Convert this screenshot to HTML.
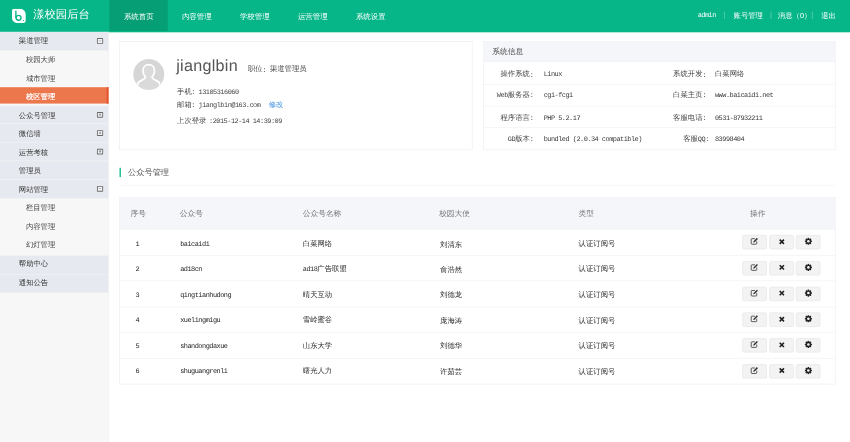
<!DOCTYPE html>
<html lang="zh">
<head>
<meta charset="utf-8">
<title>漾校园后台</title>
<style>
html,body{margin:0;padding:0;background:#fff;}
body{width:850px;height:442px;overflow:hidden;position:relative;font-family:"Liberation Sans",sans-serif;}
#wrap{filter:grayscale(0);text-rendering:geometricPrecision;position:absolute;left:0;top:0;width:1920px;height:999px;transform:scale(0.442708);transform-origin:0 0;background:#fff;overflow:hidden;color:#555;font-size:16.6px;}
#wrap *{box-sizing:border-box;}
.abs{position:absolute;white-space:nowrap;}
/* header */
#hd{position:absolute;left:0;top:0;width:1920px;height:72.6px;background:#06b688;}
#hd .act{position:absolute;left:247px;top:0;width:132px;height:70px;background:#059e75;}
#hd .nv{position:absolute;top:0;height:72px;line-height:78px;width:131px;text-align:center;color:#fff;font-size:16.8px;}
#hd .rt{position:absolute;top:0;height:72px;line-height:69px;color:#fff;font-size:16.6px;white-space:nowrap;}
#hd .sp{position:absolute;top:26px;width:1px;height:17px;background:#9fe3cd;}
#logo-t{position:absolute;left:75px;top:0;height:72px;line-height:67px;color:#fff;font-size:25.6px;font-weight:300;white-space:nowrap;}
/* sidebar */
#sb{position:absolute;left:0;top:72px;width:245px;height:927px;background:#f7f7f8;border-right:1px solid #e9e9ec;}
.t1{position:absolute;left:0;width:245px;background:#e6e9ef;border-top:1px solid #f4f5f8;color:#333;font-size:16.6px;padding-left:42.500px;white-space:nowrap;}
.t2{position:absolute;left:0;width:245px;color:#444;font-size:16.6px;padding-left:58.500px;white-space:nowrap;}
.pm{position:absolute;left:219.100px;width:13.5px;height:13.5px;border:2px solid #6a6a6a;border-radius:1.5px;background:#f4f5f8;margin-top:-0.400px;}
.pm:before{content:"";position:absolute;left:1.700px;top:3.900px;width:6px;height:1.7px;background:#777;}
.pm.plus:after{content:"";position:absolute;left:3.900px;top:1.700px;width:1.7px;height:6px;background:#777;}
/* cards */
.card{position:absolute;background:#fff;border:1px solid #e4e5e9;}
.lbl{position:absolute;text-align:right;white-space:nowrap;color:#444;}
.ln{position:absolute;height:1px;background:#e9eaee;}
/* table */
.th{position:absolute;color:#777;font-size:17.4px;white-space:nowrap;}
.td{position:absolute;color:#2a2a2a;font-size:16.6px;white-space:nowrap;}
.btn{position:absolute;width:55px;height:32px;background:#f3f3f3;border:1px solid #dcdcdc;border-radius:4px;}
.btn svg{position:absolute;left:19px;top:7px;width:16px;height:16px;}
#wrap .m{font-family:"Liberation Mono",monospace;font-size:15.6px;letter-spacing:-1.14px;}
#wrap .td.m{color:#222;}
#wrap span.m{position:relative;top:0.5px;}
#wrap span.c{display:inline-block;white-space:nowrap;overflow:visible;vertical-align:baseline;}
#wrap div.m{margin-top:1px;}
</style>
</head>
<body>
<div id="wrap">

<!-- HEADER -->
<div id="hd">
  <svg class="abs" style="left:27px;top:20px" width="32" height="32" viewBox="0 0 32 32">
    <path d="M5 0H19A12 12 0 0 1 31 12V27A5 5 0 0 1 26 32H12A12 12 0 0 1 0 20V5A5 5 0 0 1 5 0Z" fill="#fff"/>
    <rect x="7.300" y="3.500" width="3.100" height="18" rx="1.500" fill="#06b688"/>
    <circle cx="15" cy="20.200" r="5.600" fill="none" stroke="#06b688" stroke-width="3"/>
    <circle cx="26" cy="25.800" r="1.400" fill="#06b688"/>
  </svg>
  <div id="logo-t">漾校园后台</div>
  <div class="act"></div>
  <div class="nv" style="left:248px">系统首页</div>
  <div class="nv" style="left:379px">内容管理</div>
  <div class="nv" style="left:510px">学校管理</div>
  <div class="nv" style="left:641px">运营管理</div>
  <div class="nv" style="left:772px">系统设置</div>

  <div class="rt m" style="left:1576px;">admin</div>
  <div class="sp" style="left:1636px"></div>
  <div class="rt" style="left:1657px;">账号管理</div>
  <div class="sp" style="left:1741px"></div>
  <div class="rt" style="left:1757px;">消息（0）</div>
  <div class="sp" style="left:1834px"></div>
  <div class="rt" style="left:1855px;">退出</div>
</div>

<!-- SIDEBAR -->
<div id="sb">
  <div class="t1" style="top:0;height:42px;line-height:41px;border-top:0">渠道管理</div>
  <div class="pm" style="top:14px"></div>
  <div class="t2" style="top:43px;height:41px;line-height:41px">校园大师</div>
  <div class="t2" style="top:84px;height:41px;line-height:41px">城市管理</div>
  <div class="t2" style="top:125px;height:37px;line-height:42px;background:#ec774d;border-right:4px solid #e5512c;color:#fff;font-weight:bold">校区管理</div>

  <div class="t1" style="top:167px;height:40px;line-height:43px">公众号管理</div>
  <div class="pm plus" style="top:181px"></div>
  <div class="t1" style="top:207px;height:42px;line-height:46px">微信墙</div>
  <div class="pm plus" style="top:222px"></div>
  <div class="t1" style="top:249px;height:42px;line-height:44px">运营考核</div>
  <div class="pm plus" style="top:264px"></div>
  <div class="t1" style="top:291px;height:42px;line-height:42px">管理员</div>
  <div class="t1" style="top:333px;height:42.5px;line-height:43px">网站管理</div>
  <div class="pm" style="top:348px"></div>

  <div class="t2" style="top:376px;height:42px;line-height:42px">栏目管理</div>
  <div class="t2" style="top:418px;height:42px;line-height:45px">内容管理</div>
  <div class="t2" style="top:460px;height:42px;line-height:44px">幻灯管理</div>

  <div class="t1" style="top:504.5px;height:42.5px;line-height:35px">帮助中心</div>
  <div class="t1" style="top:547px;height:42px;line-height:35px">通知公告</div>
</div>

<!-- PROFILE CARD -->
<div class="card" style="left:270px;top:93px;width:797px;height:246px;">
  <svg class="abs" style="left:29px;top:38px" width="72" height="72" viewBox="0 0 72 72">
    <defs><clipPath id="cp"><circle cx="36" cy="36" r="35"/></clipPath></defs>
    <circle cx="36" cy="36" r="35" fill="#d6d6d6"/>
    <g clip-path="url(#cp)">
      <path d="M36 14c-8 0-13 6-13 14 0 6 2.5 11 6 14-1 4-4 5.5-9 7.5-6 2.400-9 5-9 9v14h50v-14c0-4-3-6.600-9-9-5-2-8-3.500-9-7.500 3.500-3 6-8 6-14 0-8-5-14-13-14z" fill="#dadada" stroke="#fff" stroke-width="3.800"/>
    </g>
  </svg>
</div>
<div class="abs" style="left:398px;top:123px;font-size:36.5px;letter-spacing:0.6px;line-height:50px;color:#555;">jianglbin</div>
<div class="abs" style="left:560px;top:145px;line-height:22px;color:#444;">职位<span class="m">: </span>渠道管理员</div>
<div class="abs" style="left:400px;top:196px;line-height:22px;color:#444;"><span class="c" style="width:32px">手机</span><span class="m">: 13105316060</span></div>
<div class="abs" style="left:400px;top:225.500px;line-height:22px;color:#444;"><span class="c" style="width:32px">邮箱</span><span class="m">: jianglbin@163.com</span></div>
<div class="abs" style="left:607px;top:225.500px;line-height:22px;color:#3d8fe0;">修改</div>
<div class="abs" style="left:400px;top:261.500px;line-height:22px;color:#444;"><span class="c" style="width:64px">上次登录</span><span class="m"> :2015-12-14 14:39:09</span></div>

<!-- SYSTEM INFO CARD -->
<div class="card" style="left:1091px;top:93px;width:796px;height:246px;">
  <div class="abs" style="left:0;top:0;width:794px;height:45px;background:#f5f6fa;border-bottom:1px solid #e9eaee;"></div>
</div>
<div class="abs" style="left:1112px;top:105px;line-height:22px;font-size:17.4px;color:#4a4a4a;">系统信息</div>
<div class="ln" style="left:1092px;top:190.500px;width:794px"></div>
<div class="ln" style="left:1092px;top:239px;width:794px"></div>
<div class="ln" style="left:1092px;top:288px;width:794px"></div>

<div class="lbl" style="left:1105px;width:100px;top:156px;line-height:22px;">操作系统<span class="m">:</span></div>
<div class="lbl" style="left:1105px;width:100px;top:203px;line-height:22px;"><span class="m">Web</span>服务器<span class="m">:</span></div>
<div class="lbl" style="left:1105px;width:100px;top:254.500px;line-height:22px;">程序语言<span class="m">:</span></div>
<div class="lbl" style="left:1105px;width:100px;top:302.500px;line-height:22px;"><span class="m">GD</span>版本<span class="m">:</span></div>
<div class="abs m" style="left:1228px;top:156px;line-height:22px;color:#3a3a3a">Linux</div>
<div class="abs m" style="left:1228px;top:203px;line-height:22px;color:#3a3a3a">cgi-fcgi</div>
<div class="abs m" style="left:1228px;top:254.500px;line-height:22px;color:#3a3a3a">PHP 5.2.17</div>
<div class="abs m" style="left:1228px;top:302.500px;line-height:22px;color:#3a3a3a">bundled (2.0.34 compatible)</div>

<div class="lbl" style="left:1495px;width:100px;top:156px;line-height:22px;">系统开发<span class="m">:</span></div>
<div class="lbl" style="left:1495px;width:100px;top:203px;line-height:22px;">白菜主页<span class="m">:</span></div>
<div class="lbl" style="left:1495px;width:100px;top:254.500px;line-height:22px;">客服电话<span class="m">:</span></div>
<div class="lbl" style="left:1501px;width:100px;top:302.500px;line-height:22px;">客服<span class="m">QQ:</span></div>
<div class="abs" style="left:1615px;top:156px;line-height:22px;color:#444">白菜网络</div>
<div class="abs m" style="left:1615px;top:203px;line-height:22px;color:#3a3a3a">www.baicaidi.net</div>
<div class="abs m" style="left:1615px;top:254.500px;line-height:22px;color:#3a3a3a">0531-87932211</div>
<div class="abs m" style="left:1615px;top:302.500px;line-height:22px;color:#3a3a3a">83998404</div>

<!-- SECTION TITLE -->
<div class="abs" style="left:270px;top:379px;width:3px;height:21px;background:#06b688;"></div>
<div class="abs" style="left:289px;top:377px;line-height:24px;font-size:18.6px;color:#555;">公众号管理</div>
<div class="ln" style="left:270px;top:418px;width:1617px;background:#ededf0"></div>

<!-- TABLE -->
<div class="card" style="left:270px;top:445px;width:1617px;height:423px;">
  <div class="abs" style="left:0;top:0;width:1615px;height:72px;background:#f5f6fa;border-bottom:1px solid #e9eaee;"></div>
</div>
<div class="th" style="left:295px;top:472px;line-height:22px;">序号</div>
<div class="th" style="left:406px;top:472px;line-height:22px;">公众号</div>
<div class="th" style="left:684px;top:472px;line-height:22px;">公众号名称</div>
<div class="th" style="left:992px;top:472px;line-height:22px;">校园大使</div>
<div class="th" style="left:1307px;top:472px;line-height:22px;">类型</div>
<div class="th" style="left:1694px;top:472px;line-height:22px;">操作</div>

<div class="ln" style="left:271px;top:576px;width:1615px"></div>
<div class="ln" style="left:271px;top:634px;width:1615px"></div>
<div class="ln" style="left:271px;top:693px;width:1615px"></div>
<div class="ln" style="left:271px;top:751px;width:1615px"></div>
<div class="ln" style="left:271px;top:809px;width:1615px"></div>

<!-- rows inserted below -->
<div id="rows">
<div class="td m" style="left:306px;top:539.3px;line-height:22px;">1</div>
<div class="td m" style="left:407px;top:539.3px;line-height:22px;">baicaidi</div>
<div class="td" style="left:684px;top:538.5px;line-height:22px;">白菜网络</div>
<div class="td" style="left:994px;top:540.5px;line-height:22px;">刘清东</div>
<div class="td" style="left:1307px;top:539.8px;line-height:22px;">认证订阅号</div>
<div class="btn" style="left:1677px;top:531.3px"><svg viewBox="0 0 16 16" style="left:16px;top:3px;width:20px;height:19px"><path d="M12.500 8.500v4a1.500 1.500 0 0 1-1.500 1.500H3.500A1.500 1.500 0 0 1 2 12.500V5a1.500 1.500 0 0 1 1.500-1.500H9" fill="none" stroke="#333" stroke-width="1.500"/><path d="M6.500 8.200L12.800 1.900l2 2L8.500 10.200l-2.600.6z" fill="#333"/></svg></div>
<div class="btn" style="left:1737.500px;top:531.3px"><svg viewBox="0 0 16 16" style="left:19.500px;top:5.500px;width:16px;height:16px"><path d="M3.200 3.200L12.800 12.800M12.800 3.200L3.200 12.800" stroke="#222" stroke-width="3.600" fill="none"/></svg></div>
<div class="btn" style="left:1798px;top:531.3px"><svg viewBox="0 0 16 16" style="left:17.500px;top:4px;width:18px;height:18px"><g fill="#222"><circle cx="8" cy="8" r="5.300"/><rect x="6.400" y="0.800" width="3.200" height="14.400" rx="0.600" transform="rotate(0 8 8)"/><rect x="6.400" y="0.800" width="3.200" height="14.400" rx="0.600" transform="rotate(45 8 8)"/><rect x="6.400" y="0.800" width="3.200" height="14.400" rx="0.600" transform="rotate(90 8 8)"/><rect x="6.400" y="0.800" width="3.200" height="14.400" rx="0.600" transform="rotate(135 8 8)"/></g><circle cx="8" cy="8" r="2.600" fill="#f3f3f3"/></svg></div>
<div class="td m" style="left:306px;top:596.9px;line-height:22px;">2</div>
<div class="td m" style="left:407px;top:596.9px;line-height:22px;">ad18cn</div>
<div class="td" style="left:684px;top:596.1px;line-height:22px;"><span class="m">ad18</span>广告联盟</div>
<div class="td" style="left:994px;top:598.1px;line-height:22px;">俞浩然</div>
<div class="td" style="left:1307px;top:597.4px;line-height:22px;">认证订阅号</div>
<div class="btn" style="left:1677px;top:589.5px"><svg viewBox="0 0 16 16" style="left:16px;top:3px;width:20px;height:19px"><path d="M12.500 8.500v4a1.500 1.500 0 0 1-1.500 1.500H3.500A1.500 1.500 0 0 1 2 12.500V5a1.500 1.500 0 0 1 1.500-1.500H9" fill="none" stroke="#333" stroke-width="1.500"/><path d="M6.500 8.200L12.800 1.900l2 2L8.500 10.200l-2.600.6z" fill="#333"/></svg></div>
<div class="btn" style="left:1737.500px;top:589.5px"><svg viewBox="0 0 16 16" style="left:19.500px;top:5.500px;width:16px;height:16px"><path d="M3.200 3.200L12.800 12.800M12.800 3.200L3.200 12.800" stroke="#222" stroke-width="3.600" fill="none"/></svg></div>
<div class="btn" style="left:1798px;top:589.5px"><svg viewBox="0 0 16 16" style="left:17.500px;top:4px;width:18px;height:18px"><g fill="#222"><circle cx="8" cy="8" r="5.300"/><rect x="6.400" y="0.800" width="3.200" height="14.400" rx="0.600" transform="rotate(0 8 8)"/><rect x="6.400" y="0.800" width="3.200" height="14.400" rx="0.600" transform="rotate(45 8 8)"/><rect x="6.400" y="0.800" width="3.200" height="14.400" rx="0.600" transform="rotate(90 8 8)"/><rect x="6.400" y="0.800" width="3.200" height="14.400" rx="0.600" transform="rotate(135 8 8)"/></g><circle cx="8" cy="8" r="2.600" fill="#f3f3f3"/></svg></div>
<div class="td m" style="left:306px;top:654.5px;line-height:22px;">3</div>
<div class="td m" style="left:407px;top:654.5px;line-height:22px;">qingtianhudong</div>
<div class="td" style="left:684px;top:653.7px;line-height:22px;">晴天互动</div>
<div class="td" style="left:994px;top:655.7px;line-height:22px;">刘德龙</div>
<div class="td" style="left:1307px;top:655.0px;line-height:22px;">认证订阅号</div>
<div class="btn" style="left:1677px;top:647.8px"><svg viewBox="0 0 16 16" style="left:16px;top:3px;width:20px;height:19px"><path d="M12.500 8.500v4a1.500 1.500 0 0 1-1.500 1.500H3.500A1.500 1.500 0 0 1 2 12.500V5a1.500 1.500 0 0 1 1.500-1.500H9" fill="none" stroke="#333" stroke-width="1.500"/><path d="M6.500 8.200L12.800 1.900l2 2L8.500 10.200l-2.600.6z" fill="#333"/></svg></div>
<div class="btn" style="left:1737.500px;top:647.8px"><svg viewBox="0 0 16 16" style="left:19.500px;top:5.500px;width:16px;height:16px"><path d="M3.200 3.200L12.800 12.800M12.800 3.200L3.200 12.800" stroke="#222" stroke-width="3.600" fill="none"/></svg></div>
<div class="btn" style="left:1798px;top:647.8px"><svg viewBox="0 0 16 16" style="left:17.500px;top:4px;width:18px;height:18px"><g fill="#222"><circle cx="8" cy="8" r="5.300"/><rect x="6.400" y="0.800" width="3.200" height="14.400" rx="0.600" transform="rotate(0 8 8)"/><rect x="6.400" y="0.800" width="3.200" height="14.400" rx="0.600" transform="rotate(45 8 8)"/><rect x="6.400" y="0.800" width="3.200" height="14.400" rx="0.600" transform="rotate(90 8 8)"/><rect x="6.400" y="0.800" width="3.200" height="14.400" rx="0.600" transform="rotate(135 8 8)"/></g><circle cx="8" cy="8" r="2.600" fill="#f3f3f3"/></svg></div>
<div class="td m" style="left:306px;top:712.1px;line-height:22px;">4</div>
<div class="td m" style="left:407px;top:712.1px;line-height:22px;">xuelingmigu</div>
<div class="td" style="left:684px;top:711.3px;line-height:22px;">雪岭蜜谷</div>
<div class="td" style="left:994px;top:713.3px;line-height:22px;">庞海涛</div>
<div class="td" style="left:1307px;top:712.6px;line-height:22px;">认证订阅号</div>
<div class="btn" style="left:1677px;top:706.0px"><svg viewBox="0 0 16 16" style="left:16px;top:3px;width:20px;height:19px"><path d="M12.500 8.500v4a1.500 1.500 0 0 1-1.500 1.500H3.500A1.500 1.500 0 0 1 2 12.500V5a1.500 1.500 0 0 1 1.500-1.500H9" fill="none" stroke="#333" stroke-width="1.500"/><path d="M6.500 8.200L12.800 1.900l2 2L8.500 10.200l-2.600.6z" fill="#333"/></svg></div>
<div class="btn" style="left:1737.500px;top:706.0px"><svg viewBox="0 0 16 16" style="left:19.500px;top:5.500px;width:16px;height:16px"><path d="M3.200 3.200L12.800 12.800M12.800 3.200L3.200 12.800" stroke="#222" stroke-width="3.600" fill="none"/></svg></div>
<div class="btn" style="left:1798px;top:706.0px"><svg viewBox="0 0 16 16" style="left:17.500px;top:4px;width:18px;height:18px"><g fill="#222"><circle cx="8" cy="8" r="5.300"/><rect x="6.400" y="0.800" width="3.200" height="14.400" rx="0.600" transform="rotate(0 8 8)"/><rect x="6.400" y="0.800" width="3.200" height="14.400" rx="0.600" transform="rotate(45 8 8)"/><rect x="6.400" y="0.800" width="3.200" height="14.400" rx="0.600" transform="rotate(90 8 8)"/><rect x="6.400" y="0.800" width="3.200" height="14.400" rx="0.600" transform="rotate(135 8 8)"/></g><circle cx="8" cy="8" r="2.600" fill="#f3f3f3"/></svg></div>
<div class="td m" style="left:306px;top:769.7px;line-height:22px;">5</div>
<div class="td m" style="left:407px;top:769.7px;line-height:22px;">shandongdaxue</div>
<div class="td" style="left:684px;top:768.9px;line-height:22px;">山东大学</div>
<div class="td" style="left:994px;top:770.9px;line-height:22px;">刘德华</div>
<div class="td" style="left:1307px;top:770.2px;line-height:22px;">认证订阅号</div>
<div class="btn" style="left:1677px;top:764.3px"><svg viewBox="0 0 16 16" style="left:16px;top:3px;width:20px;height:19px"><path d="M12.500 8.500v4a1.500 1.500 0 0 1-1.500 1.500H3.500A1.500 1.500 0 0 1 2 12.500V5a1.500 1.500 0 0 1 1.500-1.500H9" fill="none" stroke="#333" stroke-width="1.500"/><path d="M6.500 8.200L12.800 1.900l2 2L8.500 10.200l-2.600.6z" fill="#333"/></svg></div>
<div class="btn" style="left:1737.500px;top:764.3px"><svg viewBox="0 0 16 16" style="left:19.500px;top:5.500px;width:16px;height:16px"><path d="M3.200 3.200L12.800 12.800M12.800 3.200L3.200 12.800" stroke="#222" stroke-width="3.600" fill="none"/></svg></div>
<div class="btn" style="left:1798px;top:764.3px"><svg viewBox="0 0 16 16" style="left:17.500px;top:4px;width:18px;height:18px"><g fill="#222"><circle cx="8" cy="8" r="5.300"/><rect x="6.400" y="0.800" width="3.200" height="14.400" rx="0.600" transform="rotate(0 8 8)"/><rect x="6.400" y="0.800" width="3.200" height="14.400" rx="0.600" transform="rotate(45 8 8)"/><rect x="6.400" y="0.800" width="3.200" height="14.400" rx="0.600" transform="rotate(90 8 8)"/><rect x="6.400" y="0.800" width="3.200" height="14.400" rx="0.600" transform="rotate(135 8 8)"/></g><circle cx="8" cy="8" r="2.600" fill="#f3f3f3"/></svg></div>
<div class="td m" style="left:306px;top:827.3px;line-height:22px;">6</div>
<div class="td m" style="left:407px;top:827.3px;line-height:22px;">shuguangrenli</div>
<div class="td" style="left:684px;top:826.5px;line-height:22px;">曙光人力</div>
<div class="td" style="left:994px;top:828.5px;line-height:22px;">许茹芸</div>
<div class="td" style="left:1307px;top:827.8px;line-height:22px;">认证订阅号</div>
<div class="btn" style="left:1677px;top:822.5px"><svg viewBox="0 0 16 16" style="left:16px;top:3px;width:20px;height:19px"><path d="M12.500 8.500v4a1.500 1.500 0 0 1-1.500 1.500H3.500A1.500 1.500 0 0 1 2 12.500V5a1.500 1.500 0 0 1 1.500-1.500H9" fill="none" stroke="#333" stroke-width="1.500"/><path d="M6.500 8.200L12.800 1.900l2 2L8.500 10.200l-2.600.6z" fill="#333"/></svg></div>
<div class="btn" style="left:1737.500px;top:822.5px"><svg viewBox="0 0 16 16" style="left:19.500px;top:5.500px;width:16px;height:16px"><path d="M3.200 3.200L12.800 12.800M12.800 3.200L3.200 12.800" stroke="#222" stroke-width="3.600" fill="none"/></svg></div>
<div class="btn" style="left:1798px;top:822.5px"><svg viewBox="0 0 16 16" style="left:17.500px;top:4px;width:18px;height:18px"><g fill="#222"><circle cx="8" cy="8" r="5.300"/><rect x="6.400" y="0.800" width="3.200" height="14.400" rx="0.600" transform="rotate(0 8 8)"/><rect x="6.400" y="0.800" width="3.200" height="14.400" rx="0.600" transform="rotate(45 8 8)"/><rect x="6.400" y="0.800" width="3.200" height="14.400" rx="0.600" transform="rotate(90 8 8)"/><rect x="6.400" y="0.800" width="3.200" height="14.400" rx="0.600" transform="rotate(135 8 8)"/></g><circle cx="8" cy="8" r="2.600" fill="#f3f3f3"/></svg></div>
</div>

</div>
</body>
</html>
